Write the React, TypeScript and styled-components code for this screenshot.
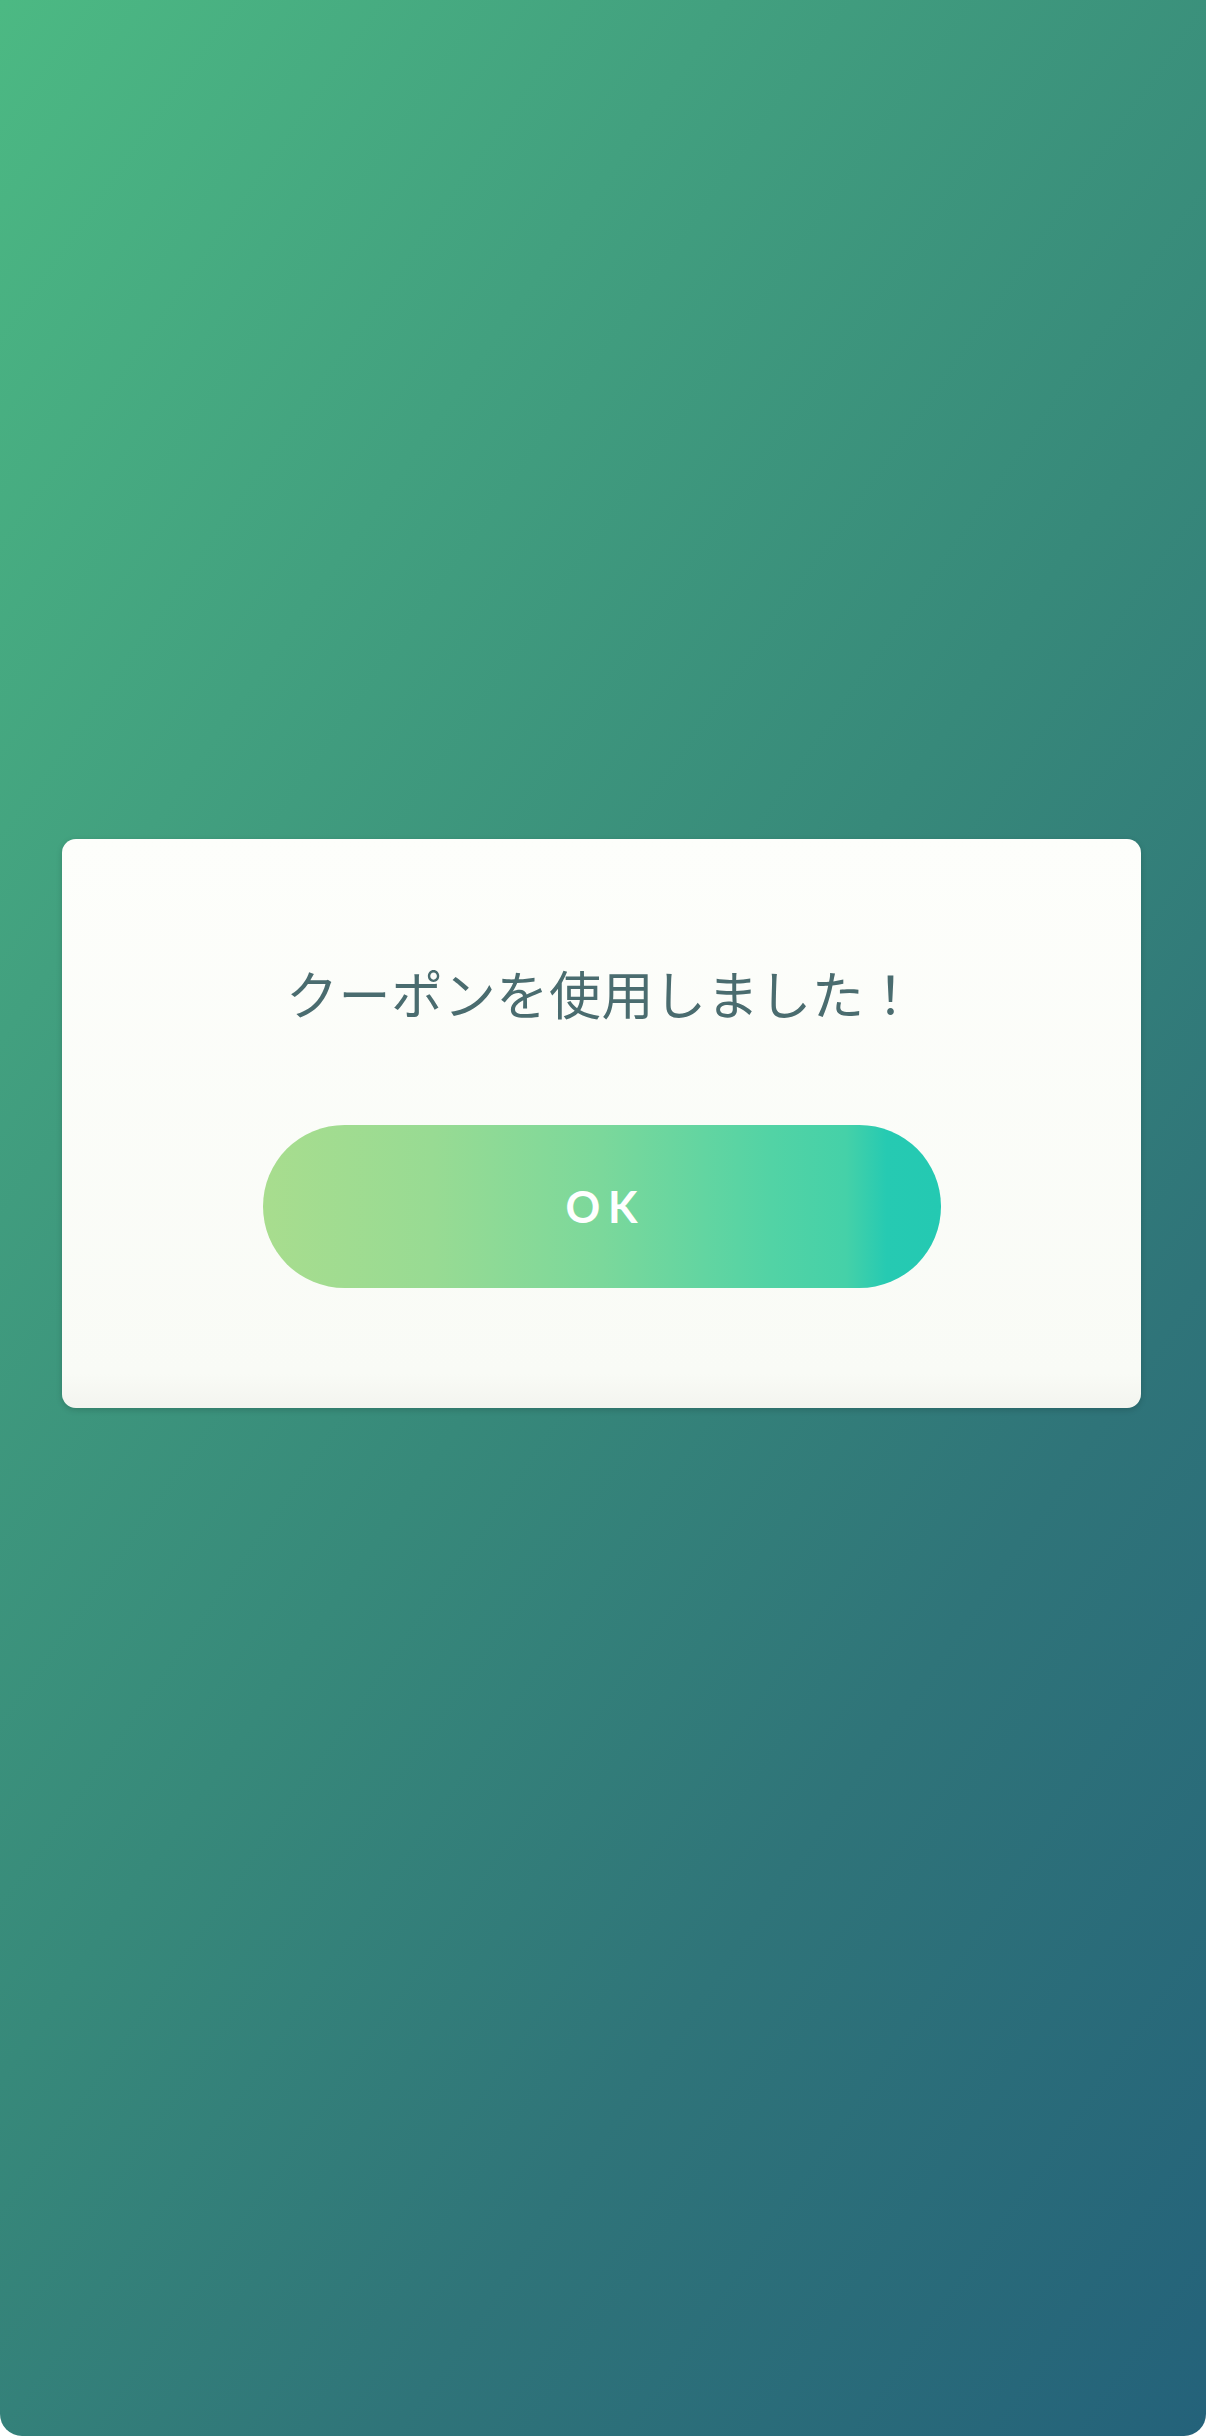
import React from 'react';
import styled, { createGlobalStyle } from 'styled-components';

const GlobalStyle = createGlobalStyle`
  html, body {
    margin: 0;
    padding: 0;
    background: #ffffff;
  }
  body {
    font-family: "Noto Sans CJK JP", "Noto Sans", sans-serif;
  }
`;

const Screen = styled.div`
  width: 1206px;
  height: 2436px;
  box-sizing: border-box;
  padding: 839px 65px 0 62px;
  background: linear-gradient(125deg, #4cb983 0%, #42a07f 25%, #37897a 50%, #2f7479 72%, #24627a 100%);
  border-radius: 0 0 22px 22px;
  overflow: hidden;
`;

const Dialog = styled.div`
  height: 569px;
  box-sizing: border-box;
  padding: 118px 0 0;
  display: flex;
  flex-direction: column;
  align-items: center;
  border-radius: 14px;
  background: linear-gradient(180deg, #fdfefb 0%, #f9fbf6 94%, #f3f4ef 100%);
  box-shadow: 0 2px 6px rgba(0, 0, 0, 0.16);
`;

const Message = styled.p`
  margin: 0;
  font-size: 52px;
  line-height: 71px;
  font-weight: 400;
  letter-spacing: 0.6px;
  color: #4a6c6f;
  white-space: nowrap;
`;

const OkButton = styled.button`
  margin-top: 97px;
  width: 678px;
  height: 163px;
  border: none;
  border-radius: 82px;
  background: linear-gradient(90deg, #a8dd8e 0%, #98db93 25%, #7bd89b 50%, #52d3a5 75%, #45d1a8 86%, #26cab2 92%, #24c9b2 100%);
  color: #ffffff;
  font-family: Lato, "Noto Sans", sans-serif;
  font-weight: 700;
  font-size: 43px;
  letter-spacing: 0.18em;
  padding: 0 0 0 0.18em;
  cursor: pointer;
`;

export default function App() {
  return (
    <>
      <GlobalStyle />
      <Screen>
        <Dialog>
          <Message>クーポンを使用しました！</Message>
          <OkButton>OK</OkButton>
        </Dialog>
      </Screen>
    </>
  );
}
